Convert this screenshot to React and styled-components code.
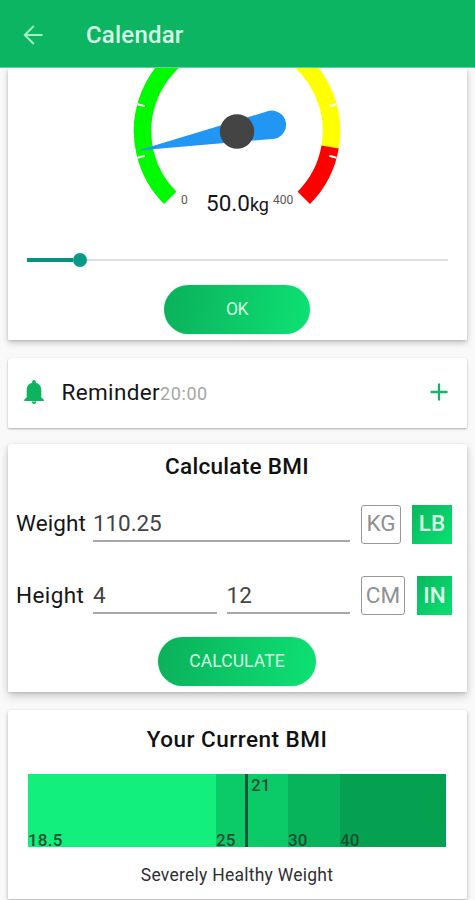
import React from 'react';
import styled, { createGlobalStyle } from 'styled-components';

const Global = createGlobalStyle`
  * { box-sizing: border-box; }
  body { margin: 0; background: #f9f9f9; font-family: Roboto, "Liberation Sans", sans-serif; color: #161616; }
`;

const Screen = styled.div`
  width: 475px;
  height: 900px;
  overflow: hidden;
  display: flex;
  flex-direction: column;
  background: #f9f9f9;
`;

const AppBar = styled.header`
  position: relative;
  z-index: 1;
  height: 68px;
  flex: none;
  display: flex;
  align-items: center;
  padding: 1px 0 0 23px;
  gap: 43px;
  background: linear-gradient(#0bb562 67px, #62d19b 67px);
  color: #d8fbe6;
`;

const BarTitle = styled.h1`
  margin: 0;
  font-size: 24px;
  font-weight: 500;
  line-height: 30px;
  letter-spacing: 0.2px;
`;

const Content = styled.main`
  flex: 1;
  padding: 0 8.5px 0 7.5px;
  display: flex;
  flex-direction: column;
`;

const Card = styled.section`
  flex: none;
  height: ${(p) => p.$height}px;
  margin-bottom: ${(p) => p.$gap || 0}px;
  border-radius: ${(p) => (p.$flatTop ? '0 0 1px 1px' : '3px 3px 1px 1px')};
  background: #fff;
  box-shadow: 0 ${(p) => p.$lift || 2}px ${(p) => (p.$lift || 2) * 2}px rgba(0, 0, 0, 0.2), 0 1px 3px rgba(0, 0, 0, 0.12);
  display: flex;
  flex-direction: column;
  align-items: center;
`;

const GaugeBox = styled.div`
  position: relative;
  width: 220px;
  height: 150px;
  flex: none;
`;

const GaugeDrawing = styled.svg`
  display: block;
`;

const GaugeLabel = styled.span`
  position: absolute;
  left: ${(p) => p.$x}px;
  top: ${(p) => p.$y}px;
  font-size: ${(p) => p.$size}px;
  line-height: ${(p) => p.$size}px;
  letter-spacing: ${(p) => p.$spacing || 0}px;
  color: ${(p) => p.$color || '#161616'};
  white-space: nowrap;
`;

const Unit = styled.small`
  font-size: 18px;
`;

const Slider = styled.div`
  width: 421px;
  height: 14px;
  margin: 35px 0 0 0;
  display: flex;
  align-items: center;
`;

const SliderFill = styled.div`
  width: 46px;
  height: 4px;
  background: #07917f;
`;

const SliderThumb = styled.div`
  width: 14px;
  height: 14px;
  border-radius: 50%;
  background: #079a87;
`;

const SliderRest = styled.div`
  flex: 1;
  height: 2.5px;
  background: #dedede;
`;

const PillButton = styled.button`
  width: ${(p) => p.$width}px;
  height: 49px;
  flex: none;
  margin: ${(p) => p.$top}px 0 0 0;
  padding: 0 0 2px;
  border: 0;
  border-radius: 25px;
  background: linear-gradient(102deg, #0bb25c 5%, #0ddf72 95%);
  box-shadow: 0 0 1.5px #9be8bf;
  color: #d3fbe2;
  font: 400 17.5px Roboto, "Liberation Sans", sans-serif;
  letter-spacing: ${(p) => p.$spacing}px;
`;

const ReminderRow = styled.div`
  width: 100%;
  height: 100%;
  display: flex;
  align-items: center;
  padding: 0 17.5px 2px 15.5px;
`;

const ReminderLabel = styled.span`
  margin-left: 16.5px;
  font-size: 22.5px;
  line-height: 28px;
  letter-spacing: 0.35px;
`;

const ReminderTime = styled.span`
  flex: 1;
  padding-top: 4px;
  font-size: 18px;
  line-height: 24px;
  letter-spacing: 0.6px;
  color: #a6a6a6;
`;

const CardTitle = styled.h2`
  margin: ${(p) => p.$top}px 0 0 0;
  font-size: 22.5px;
  font-weight: 500;
  line-height: 28px;
  letter-spacing: ${(p) => p.$spacing}px;
  color: #111;
`;

const FieldRow = styled.div`
  width: 100%;
  height: 40px;
  margin-top: ${(p) => p.$top}px;
  padding: 0 15.5px 0 8.5px;
  display: flex;
  align-items: center;
`;

const FieldLabel = styled.label`
  width: 77px;
  flex: none;
  padding-bottom: 2px;
  font-size: 22.5px;
  line-height: 28px;
  letter-spacing: ${(p) => p.$spacing}px;
`;

const FieldInput = styled.div`
  width: ${(p) => p.$width}px;
  flex: none;
  height: 38px;
  margin-right: ${(p) => p.$after}px;
  align-self: flex-start;
  padding-top: 5px;
  border-bottom: 2px solid #a8a8a8;
  font-size: 22.5px;
  line-height: 28px;
  letter-spacing: ${(p) => p.$spacing || 0}px;
  color: #444;
`;

const UnitToggle = styled.button`
  width: ${(p) => p.$width}px;
  height: 39px;
  flex: none;
  margin-left: ${(p) => p.$before || 0}px;
  padding: 0 0 2px;
  border: ${(p) => (p.$active ? '0' : '1.5px solid #979797')};
  border-radius: ${(p) => (p.$active ? 0 : 3)}px;
  background: ${(p) => (p.$active ? 'linear-gradient(130deg, #0bb75f, #0be071)' : '#fff')};
  color: ${(p) => (p.$active ? '#d8fbe6' : '#909090')};
  font: ${(p) => (p.$active ? 500 : 400)} 22.5px Roboto, "Liberation Sans", sans-serif;
  letter-spacing: ${(p) => p.$spacing || 0}px;
`;

const BmiScale = styled.div`
  position: relative;
  width: 418px;
  height: 73px;
  margin-top: 21px;
  display: flex;
  flex: none;
`;

const BmiBand = styled.div`
  width: ${(p) => p.$width}px;
  display: flex;
  align-items: flex-end;
  background: ${(p) => p.$color};
  color: #1b4f33;
  font-size: 17px;
  font-weight: 500;
  line-height: 13px;
  letter-spacing: 0.2px;
`;

const BmiMarker = styled.div`
  position: absolute;
  left: 217px;
  top: 0;
  height: 73px;
  padding: 5px 0 0 3px;
  border-left: 3px solid #1b5537;
  color: #1b4f33;
  font-size: 17px;
  font-weight: 500;
  line-height: 13px;
`;

const Verdict = styled.p`
  margin: 17px 0 0 0;
  font-size: 17.5px;
  line-height: 22px;
  letter-spacing: 0.25px;
  color: #303030;
`;

const CX = 110;
const CY = 63;

const polar = (r, deg) => {
  const a = (deg * Math.PI) / 180;
  return `${(CX + r * Math.cos(a)).toFixed(2)} ${(CY + r * Math.sin(a)).toFixed(2)}`;
};

const arc = (from, to) => `M${polar(94.5, from)} A94.5 94.5 0 0 1 ${polar(94.5, to)}`;

function Gauge() {
  return (
    <GaugeBox>
      <GaugeDrawing width="220" height="150" viewBox="0 0 220 150">
        <g fill="none" strokeWidth="17.5">
          <path d={arc(135, 260)} stroke="#00fa00" />
          <path d={arc(290, 370)} stroke="#ffff00" />
          <path d={arc(369.8, 405)} stroke="#fe0000" />
        </g>
        <g stroke="#f1fff1" strokeWidth="2">
          {[165, 195, 345, 375].map((d) => (
            <path key={d} d={`M${polar(103, d)} L${polar(95.5, d)}`} />
          ))}
        </g>
        <path d="M11 82.500 L140.500 43.300 A14.200 14.200 0 1 1 145 71 Z" fill="#2196f3" />
        <circle cx={CX} cy={CY + 0.5} r="17.2" fill="#444" />
      </GaugeDrawing>
      <GaugeLabel $x={54} $y={126} $size={12} $color="#555">0</GaugeLabel>
      <GaugeLabel $x={79} $y={124} $size={22.5} $spacing={0}>50.0<Unit>kg</Unit></GaugeLabel>
      <GaugeLabel $x={146} $y={126} $size={12} $color="#555">400</GaugeLabel>
    </GaugeBox>
  );
}

export default function App() {
  return (
    <>
      <Global />
      <Screen>
        <AppBar>
          <svg width="20" height="20" viewBox="0 0 20 20" fill="none" stroke="#a5efc3" strokeWidth="2">
            <path d="M19.5 10H2M10.8 1L1.8 10L10.8 19" />
          </svg>
          <BarTitle>Calendar</BarTitle>
        </AppBar>
        <Content>
          <Card $height={271.5} $gap={18.5} $flatTop $lift={3}>
            <Gauge />
            <Slider>
              <SliderFill />
              <SliderThumb />
              <SliderRest />
            </Slider>
            <PillButton $width={146} $top={18} $spacing={-0.5}>OK</PillButton>
          </Card>
          <Card $height={70} $gap={16} $lift={1}>
            <ReminderRow>
              <svg width="22" height="26" viewBox="0 0 22 26" fill="#0bb45d">
                <path d="M11 1c1.2 0 1.8.9 1.8 2v.8c3.700.9 5.500 3.900 5.500 7.600v6.800l2.500 2.600v1.200H1.200v-1.200l2.500-2.600v-6.800c0-3.700 1.800-6.700 5.500-7.600V3c0-1.100.6-2 1.800-2zM8.700 22.600h4.600c0 1.500-1 2.400-2.300 2.400s-2.300-.9-2.300-2.400z" />
              </svg>
              <ReminderLabel>Reminder</ReminderLabel>
              <ReminderTime>20:00</ReminderTime>
              <svg width="20" height="20" viewBox="0 0 20 20" stroke="#18b36b" strokeWidth="2.3">
                <path d="M10 1.5V18.5M1.5 10H18.5" />
              </svg>
            </ReminderRow>
          </Card>
          <Card $height={247.5} $gap={18.5} $lift={4}>
            <CardTitle $top={8} $spacing={0.3}>Calculate BMI</CardTitle>
            <FieldRow $top={24}>
              <FieldLabel $spacing={0.1}>Weight</FieldLabel>
              <FieldInput $width={257} $after={11} $spacing={-0.1}>110.25</FieldInput>
              <UnitToggle $width={40}>KG</UnitToggle>
              <UnitToggle $width={40} $before={11} $active>LB</UnitToggle>
            </FieldRow>
            <FieldRow $top={31.5}>
              <FieldLabel $spacing={0.4}>Height</FieldLabel>
              <FieldInput $width={124} $after={9.5}>4</FieldInput>
              <FieldInput $width={123.5} $after={11}>12</FieldInput>
              <UnitToggle $width={44}>CM</UnitToggle>
              <UnitToggle $width={35} $before={12} $active>IN</UnitToggle>
            </FieldRow>
            <PillButton $width={158} $top={21.5} $spacing={0.1}>CALCULATE</PillButton>
          </Card>
          <Card $height={189} $lift={2}>
            <CardTitle $top={15} $spacing={0.5}>Your Current BMI</CardTitle>
            <BmiScale>
              <BmiBand $width={188} $color="#12ef7c">18.5</BmiBand>
              <BmiBand $width={72} $color="#0acb68">25</BmiBand>
              <BmiBand $width={52} $color="#07b45c">30</BmiBand>
              <BmiBand $width={106} $color="#05a151">40</BmiBand>
              <BmiMarker>21</BmiMarker>
            </BmiScale>
            <Verdict>Severely Healthy Weight</Verdict>
          </Card>
        </Content>
      </Screen>
    </>
  );
}
